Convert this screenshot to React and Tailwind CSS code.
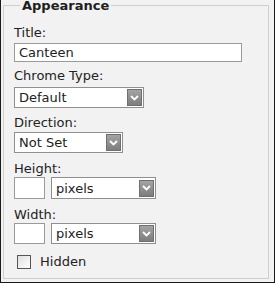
import { useState } from 'react'

const font = { fontFamily: '"DejaVu Sans", Verdana, sans-serif' }

function Chevron() {
  return (
    <svg width="9" height="6" viewBox="0 0 9 6" className="block">
      <path d="M1 1 L4.5 4.5 L8 1" fill="none" stroke="#fff" strokeWidth="1.8" />
    </svg>
  )
}

function Select({ value, width }) {
  return (
    <div
      className={`flex items-center justify-between h-[21px] border border-[#8f8f8f] bg-white pl-[4px] pr-[1px] ${width}`}
    >
      <span className="text-[13px] leading-none text-[#222]">{value}</span>
      <span className="w-[15px] h-[17px] flex items-center justify-center border border-[#6f6f6f] bg-gradient-to-b from-[#a4a4a4] to-[#7d7d7d]">
        <Chevron />
      </span>
    </div>
  )
}

function Label({ children, className = '' }) {
  return <label className={`block text-[13px] leading-[15px] text-[#222] ${className}`}>{children}</label>
}

export default function App() {
  const [title, setTitle] = useState('Canteen')
  const [hidden, setHidden] = useState(false)

  return (
    <div style={font} className="w-[275px] h-[283px] bg-[#f2f2f2] border-l border-r border-b border-[#1a1a1a] pl-[2px] pr-[5px]">
      <fieldset className="h-[279px] border border-[#cfcfcf] pl-[10px]">
        <legend className="ml-[6px] px-[2px] text-[13px] leading-[11px] font-bold text-[#1e1e1e]">
          Appearance
        </legend>

        <Label className="mt-[14px]">Title:</Label>
        <input
          value={title}
          onChange={e => setTitle(e.target.value)}
          className="mt-[3px] block w-[228px] h-[19px] border border-[#9a9a9a] bg-white px-[4px] text-[13px] text-[#222] outline-none"
        />

        <Label className="mt-[6px]">Chrome Type:</Label>
        <div className="mt-[4px]">
          <Select value="Default" width="w-[130px]" />
        </div>

        <Label className="mt-[7px]">Direction:</Label>
        <div className="mt-[2px]">
          <Select value="Not Set" width="w-[109px]" />
        </div>

        <Label className="mt-[8px]">Height:</Label>
        <div className="mt-[1px] flex gap-[6px]">
          <input className="block w-[31px] h-[22px] border border-[#9a9a9a] bg-white outline-none" />
          <Select value="pixels" width="w-[105px] !h-[22px]" />
        </div>

        <Label className="mt-[8px]">Width:</Label>
        <div className="mt-[1px] flex gap-[6px]">
          <input className="block w-[31px] h-[21px] border border-[#9a9a9a] bg-white outline-none" />
          <Select value="pixels" width="w-[105px]" />
        </div>

        <label className="mt-[10px] flex items-center gap-[9px] pl-[3px] text-[13px] leading-[15px] text-[#222]">
          <span
            onClick={() => setHidden(h => !h)}
            className="w-[14px] h-[14px] border border-[#555] bg-gradient-to-br from-[#e0e0e0] to-white flex items-center justify-center text-[10px]"
          >
            {hidden ? '✓' : ''}
          </span>
          Hidden
        </label>
      </fieldset>
    </div>
  )
}
